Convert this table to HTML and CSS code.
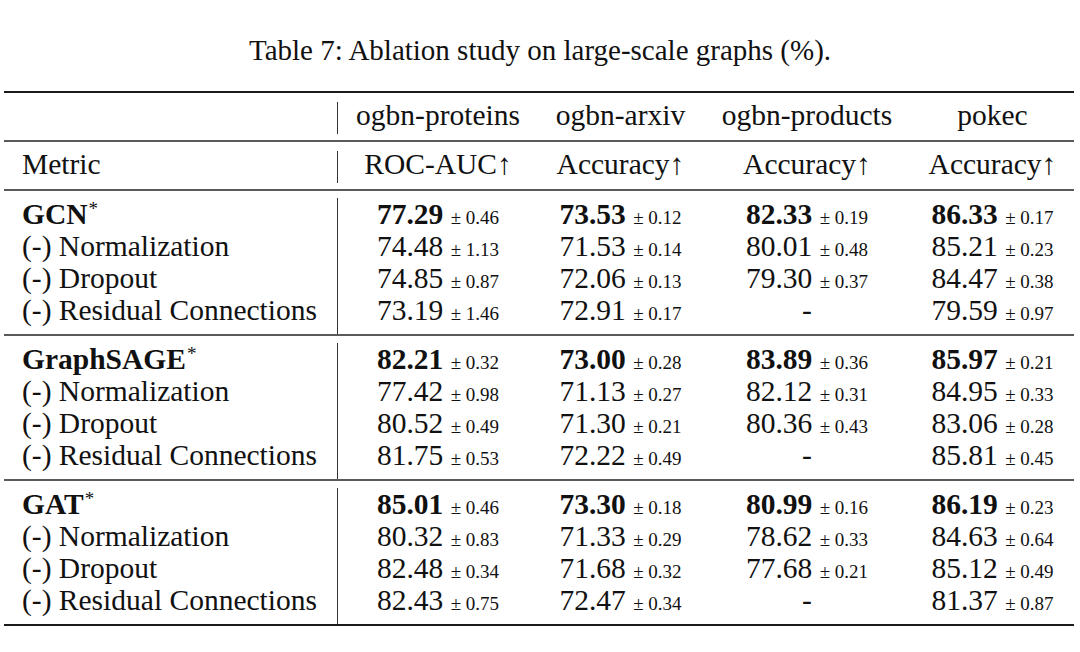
FILE: index.html
```html
<!DOCTYPE html>
<html lang="en">
<head>
<meta charset="utf-8">
<title>Table 7</title>
<link rel="stylesheet" href="styles.css">
</head>
<body>
<div class="page">
  <div class="caption">Table 7: Ablation study on large-scale graphs (%).</div>
  <div class="table">
    <div class="rule thick"></div>
    <div class="section head">
      <div class="row">
        <div class="c name"></div>
        <div class="c">ogbn-proteins</div>
        <div class="c">ogbn-arxiv</div>
        <div class="c">ogbn-products</div>
        <div class="c">pokec</div>
      </div>
    </div>
    <div class="rule mid"></div>
    <div class="section head">
      <div class="row">
        <div class="c name">Metric</div>
        <div class="c">ROC-AUC↑</div>
        <div class="c">Accuracy↑</div>
        <div class="c">Accuracy↑</div>
        <div class="c">Accuracy↑</div>
      </div>
    </div>
    <div class="rule mid"></div>

    <div class="section data">
      <div class="row">
        <div class="c name"><b>GCN</b><span class="star">*</span></div>
        <div class="c"><b>77.29</b> <span class="sd">± 0.46</span></div>
        <div class="c"><b>73.53</b> <span class="sd">± 0.12</span></div>
        <div class="c"><b>82.33</b> <span class="sd">± 0.19</span></div>
        <div class="c"><b>86.33</b> <span class="sd">± 0.17</span></div>
      </div>
      <div class="row">
        <div class="c name">(-) Normalization</div>
        <div class="c">74.48 <span class="sd">± 1.13</span></div>
        <div class="c">71.53 <span class="sd">± 0.14</span></div>
        <div class="c">80.01 <span class="sd">± 0.48</span></div>
        <div class="c">85.21 <span class="sd">± 0.23</span></div>
      </div>
      <div class="row">
        <div class="c name">(-) Dropout</div>
        <div class="c">74.85 <span class="sd">± 0.87</span></div>
        <div class="c">72.06 <span class="sd">± 0.13</span></div>
        <div class="c">79.30 <span class="sd">± 0.37</span></div>
        <div class="c">84.47 <span class="sd">± 0.38</span></div>
      </div>
      <div class="row">
        <div class="c name">(-) Residual Connections</div>
        <div class="c">73.19 <span class="sd">± 1.46</span></div>
        <div class="c">72.91 <span class="sd">± 0.17</span></div>
        <div class="c">-</div>
        <div class="c">79.59 <span class="sd">± 0.97</span></div>
      </div>
    </div>
    <div class="rule mid"></div>

    <div class="section data">
      <div class="row">
        <div class="c name"><b>GraphSAGE</b><span class="star">*</span></div>
        <div class="c"><b>82.21</b> <span class="sd">± 0.32</span></div>
        <div class="c"><b>73.00</b> <span class="sd">± 0.28</span></div>
        <div class="c"><b>83.89</b> <span class="sd">± 0.36</span></div>
        <div class="c"><b>85.97</b> <span class="sd">± 0.21</span></div>
      </div>
      <div class="row">
        <div class="c name">(-) Normalization</div>
        <div class="c">77.42 <span class="sd">± 0.98</span></div>
        <div class="c">71.13 <span class="sd">± 0.27</span></div>
        <div class="c">82.12 <span class="sd">± 0.31</span></div>
        <div class="c">84.95 <span class="sd">± 0.33</span></div>
      </div>
      <div class="row">
        <div class="c name">(-) Dropout</div>
        <div class="c">80.52 <span class="sd">± 0.49</span></div>
        <div class="c">71.30 <span class="sd">± 0.21</span></div>
        <div class="c">80.36 <span class="sd">± 0.43</span></div>
        <div class="c">83.06 <span class="sd">± 0.28</span></div>
      </div>
      <div class="row">
        <div class="c name">(-) Residual Connections</div>
        <div class="c">81.75 <span class="sd">± 0.53</span></div>
        <div class="c">72.22 <span class="sd">± 0.49</span></div>
        <div class="c">-</div>
        <div class="c">85.81 <span class="sd">± 0.45</span></div>
      </div>
    </div>
    <div class="rule mid"></div>

    <div class="section data">
      <div class="row">
        <div class="c name"><b>GAT</b><span class="star">*</span></div>
        <div class="c"><b>85.01</b> <span class="sd">± 0.46</span></div>
        <div class="c"><b>73.30</b> <span class="sd">± 0.18</span></div>
        <div class="c"><b>80.99</b> <span class="sd">± 0.16</span></div>
        <div class="c"><b>86.19</b> <span class="sd">± 0.23</span></div>
      </div>
      <div class="row">
        <div class="c name">(-) Normalization</div>
        <div class="c">80.32 <span class="sd">± 0.83</span></div>
        <div class="c">71.33 <span class="sd">± 0.29</span></div>
        <div class="c">78.62 <span class="sd">± 0.33</span></div>
        <div class="c">84.63 <span class="sd">± 0.64</span></div>
      </div>
      <div class="row">
        <div class="c name">(-) Dropout</div>
        <div class="c">82.48 <span class="sd">± 0.34</span></div>
        <div class="c">71.68 <span class="sd">± 0.32</span></div>
        <div class="c">77.68 <span class="sd">± 0.21</span></div>
        <div class="c">85.12 <span class="sd">± 0.49</span></div>
      </div>
      <div class="row">
        <div class="c name">(-) Residual Connections</div>
        <div class="c">82.43 <span class="sd">± 0.75</span></div>
        <div class="c">72.47 <span class="sd">± 0.34</span></div>
        <div class="c">-</div>
        <div class="c">81.37 <span class="sd">± 0.87</span></div>
      </div>
    </div>
    <div class="rule thick"></div>
  </div>
</div>
</body>
</html>
```
FILE: styles.css
```css
html, body {
  margin: 0;
  padding: 0;
  background: #ffffff;
}

body {
  font-family: "Liberation Serif", "Times New Roman", serif;
  color: #111111;
  width: 1080px;
}

.page {
  padding-top: 34px;
}

.caption {
  font-size: 29px;
  line-height: 32px;
  text-align: center;
  margin-bottom: 25px;
}

.table {
  margin-left: 4px;
  width: 1070px;
  font-size: 29.5px;
}

.rule.thick {
  height: 2px;
  background: #1a1a1a;
}

.rule.mid {
  height: 2px;
  background: #5a5a5a;
}

.section.head {
  padding: 9px 0 6px;
}

.section.data {
  padding-top: 7px;
}

.row {
  display: grid;
  grid-template-columns: 334px 200px 165px 208px 163px;
  height: 32px;
}

.section.data .row:last-child {
  height: 40px;
}

.c {
  line-height: 32px;
  text-align: center;
  white-space: nowrap;
}

.section.head .c {
  line-height: 26px;
}

.c.name {
  text-align: left;
  padding-left: 18px;
  border-right: 1px solid #333333;
}

.c b {
  font-weight: bold;
}

.sd {
  font-size: 19px;
}

.star {
  font-size: 19px;
  line-height: 0;
  vertical-align: 9px;
  margin-left: 1px;
}
```
